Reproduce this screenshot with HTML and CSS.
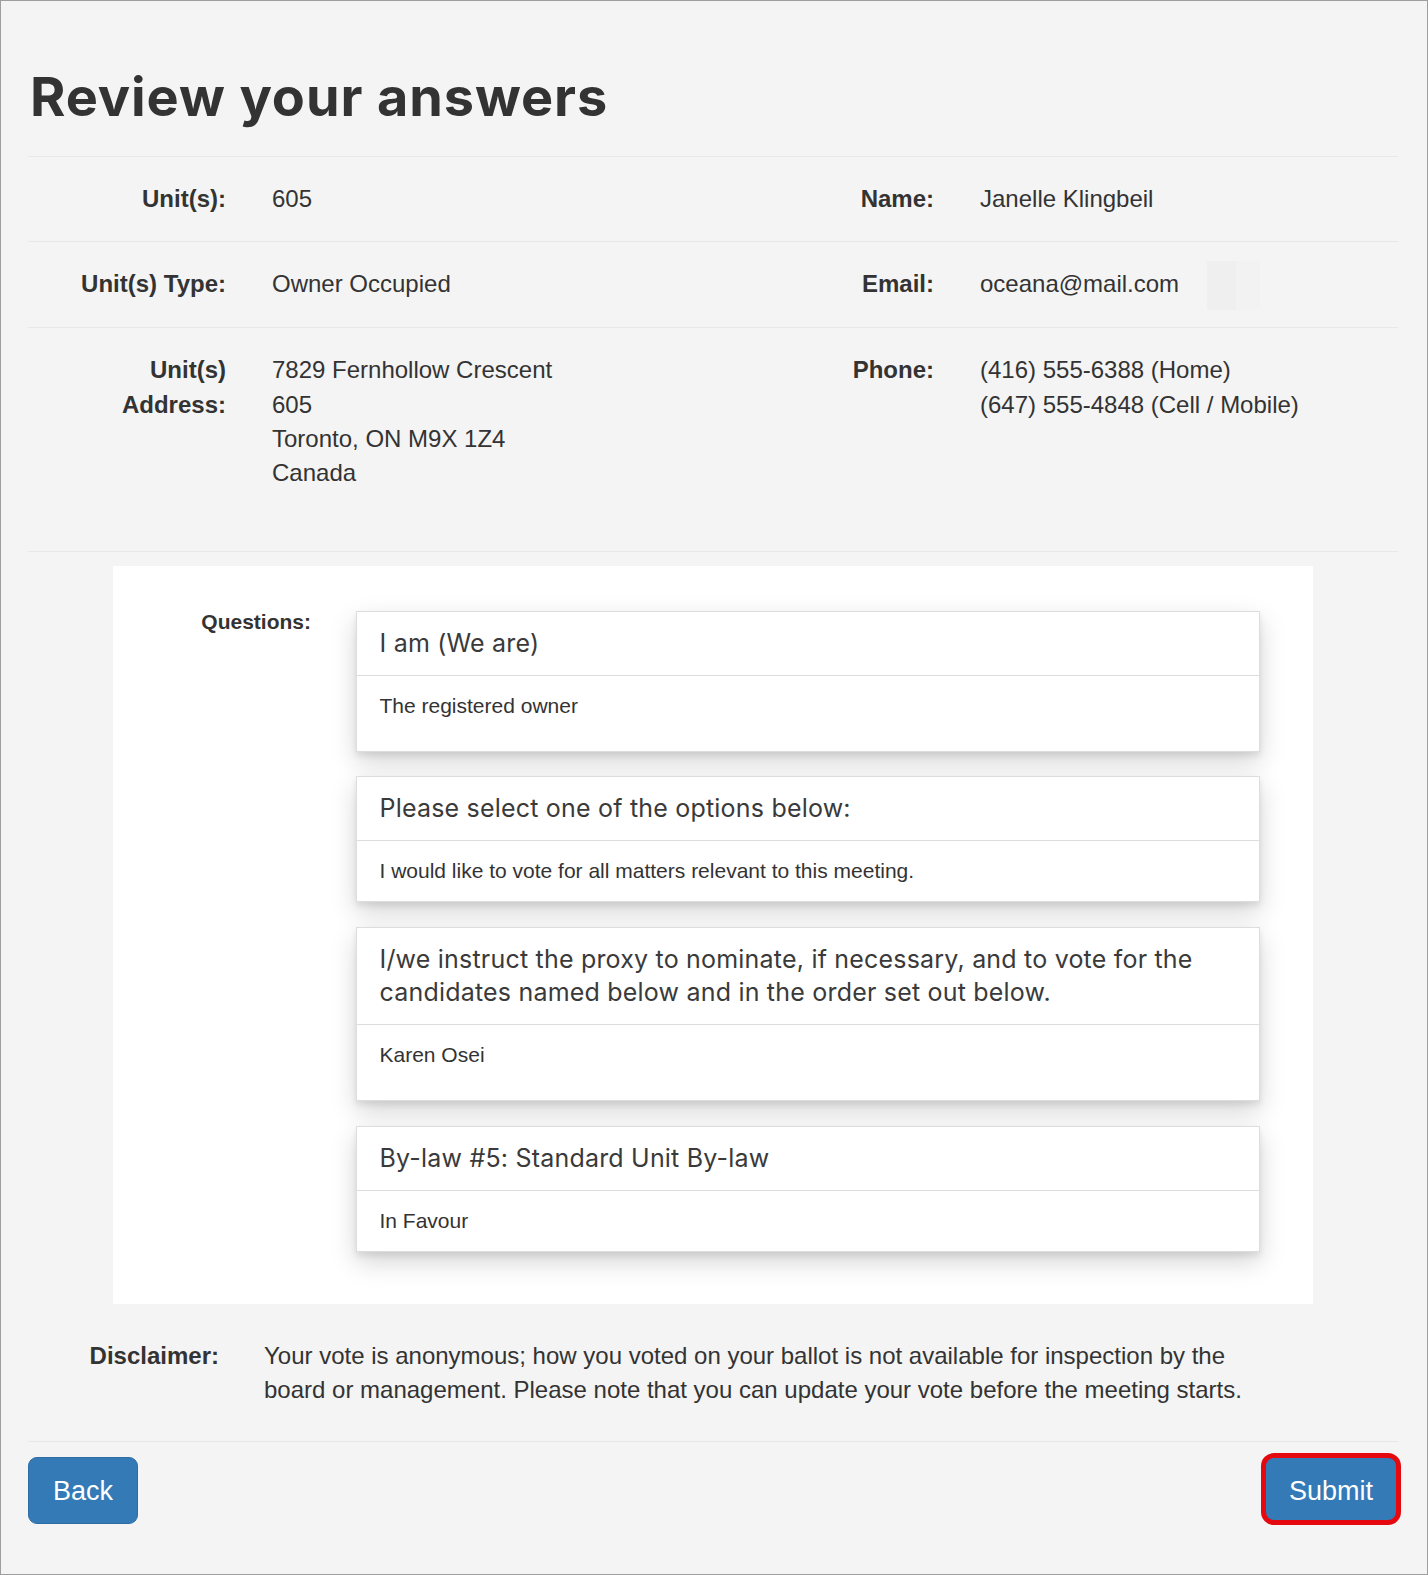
FILE: index.html
```html
<!DOCTYPE html>
<html lang="en">
<head>
<meta charset="utf-8">
<title>Review your answers</title>
<link rel="stylesheet" href="styles.css">
</head>
<body>
<div class="page">
  <h1 class="title">Review your answers</h1>

  <div class="info-row">
    <div class="lbl">Unit(s):</div>
    <div class="val">605</div>
    <div class="lbl">Name:</div>
    <div class="val">Janelle Klingbeil</div>
  </div>

  <div class="info-row">
    <div class="lbl">Unit(s) Type:</div>
    <div class="val">Owner Occupied</div>
    <div class="lbl">Email:</div>
    <div class="val">oceana@mail.com<span class="ghost"></span></div>
  </div>

  <div class="info-row tall">
    <div class="lbl">Unit(s) Address:</div>
    <div class="val">7829 Fernhollow Crescent<br>605<br>Toronto, ON M9X 1Z4<br>Canada</div>
    <div class="lbl">Phone:</div>
    <div class="val">(416) 555-6388 (Home)<br>(647) 555-4848 (Cell / Mobile)</div>
  </div>

  <div class="q-section">
    <div class="q-panel">
      <div class="q-label">Questions:</div>
      <div class="q-list">
        <div class="card">
          <div class="card-head">I am (We are)</div>
          <div class="card-body extra"><p>The registered owner</p></div>
        </div>
        <div class="card">
          <div class="card-head">Please select one of the options below:</div>
          <div class="card-body"><p>I would like to vote for all matters relevant to this meeting.</p></div>
        </div>
        <div class="card">
          <div class="card-head">I/we instruct the proxy to nominate, if necessary, and to vote for the candidates named below and in the order set out below.</div>
          <div class="card-body extra"><p>Karen Osei</p></div>
        </div>
        <div class="card last">
          <div class="card-head">By-law #5: Standard Unit By-law</div>
          <div class="card-body"><p>In Favour</p></div>
        </div>
      </div>
    </div>
  </div>

  <div class="disclaimer">
    <div class="lbl-d">Disclaimer:</div>
    <div class="disc-text">Your vote is anonymous; how you voted on your ballot is not available for inspection by the board or management. Please note that you can update your vote before the meeting starts.</div>
  </div>

  <div class="actions">
    <button class="btn" type="button">Back</button>
    <div class="submit-wrap">
      <button class="btn" type="submit">Submit</button>
      <span class="ring"></span>
    </div>
  </div>
</div>
</body>
</html>
```

FILE: styles.css
```css
html, body {
  margin: 0;
  padding: 0;
}

body {
  background: #f4f4f4;
  font-family: "Liberation Sans", Arial, sans-serif;
  color: #333;
}

.page {
  box-sizing: border-box;
  min-height: 1575px;
  border: 1px solid #9e9e9e;
  padding: 66px 29px 0 27px;
}

.title {
  margin: 0 0 29px;
  padding-left: 2px;
  font-family: Inter, "Open Sans", sans-serif;
  font-weight: 700;
  font-size: 54px;
  line-height: 60px;
  letter-spacing: 0.9px;
  color: #333;
}

.info-row {
  display: grid;
  grid-template-columns: 198px 487px 221px 1fr;
  border-top: 1px solid #e8e8e8;
  padding: 25px 0;
  font-size: 24px;
  line-height: 1.42857;
}

.info-row.tall {
  padding-bottom: 60px;
}

.lbl {
  font-weight: bold;
  text-align: right;
  padding-left: 22px;
}

.val {
  padding-left: 46px;
}

.ghost {
  display: inline-block;
  width: 53px;
  height: 49px;
  margin: -8px 0 -8px 28px;
  vertical-align: middle;
  background: linear-gradient(to right, #efefef 29px, #f2f2f2 29px);
}

.q-section {
  border-top: 1px solid #e8e8e8;
  padding: 14px 0 0 85px;
}

.q-panel {
  box-sizing: border-box;
  width: 1200px;
  background: #fff;
  display: grid;
  grid-template-columns: 198px 904px;
  column-gap: 45px;
  align-items: start;
  padding: 45px 53px 52px 0;
}

.q-label {
  text-align: right;
  font-weight: bold;
  font-size: 21px;
  line-height: 30px;
  margin-top: -4px;
}

.card {
  background: #fff;
  border: 1px solid #ddd;
  box-shadow: 0 10px 24px rgba(0, 0, 0, 0.17), 0 4px 6px rgba(0, 0, 0, 0.08);
  margin-bottom: 24.7px;
}

.card.last {
  margin-bottom: 0;
}

.card-head {
  padding: 15px 22.5px;
  border-bottom: 1px solid #ddd;
  font-family: Inter, "Open Sans", sans-serif;
  font-weight: 400;
  font-size: 25px;
  line-height: 33px;
  letter-spacing: 0.2px;
  color: #3a3a3a;
}

.card-body {
  padding: 15px 22.5px;
  font-size: 21px;
  line-height: 30px;
}

.card-body p {
  margin: 0;
}

.card-body.extra p {
  margin-bottom: 15px;
}

.disclaimer {
  display: grid;
  grid-template-columns: 191px 1010px;
  column-gap: 45px;
  margin-top: 35px;
  padding-bottom: 34px;
  font-size: 24px;
  line-height: 1.42857;
}

.lbl-d {
  font-weight: bold;
  text-align: right;
}

.actions {
  border-top: 1px solid #e8e8e8;
  padding-top: 15px;
  display: flex;
  justify-content: space-between;
  align-items: flex-start;
}

.btn {
  font-family: "Liberation Sans", Arial, sans-serif;
  font-size: 27px;
  line-height: 36px;
  padding: 14.5px 24px;
  color: #fff;
  background: #337ab7;
  border: 1px solid #2e6da4;
  border-radius: 9px;
  cursor: pointer;
}

.submit-wrap {
  position: relative;
  display: flex;
}

.ring {
  position: absolute;
  top: -4px;
  left: -3px;
  right: -3px;
  bottom: -1px;
  border: 5px solid #e5090f;
  border-radius: 13px;
  pointer-events: none;
}
```
